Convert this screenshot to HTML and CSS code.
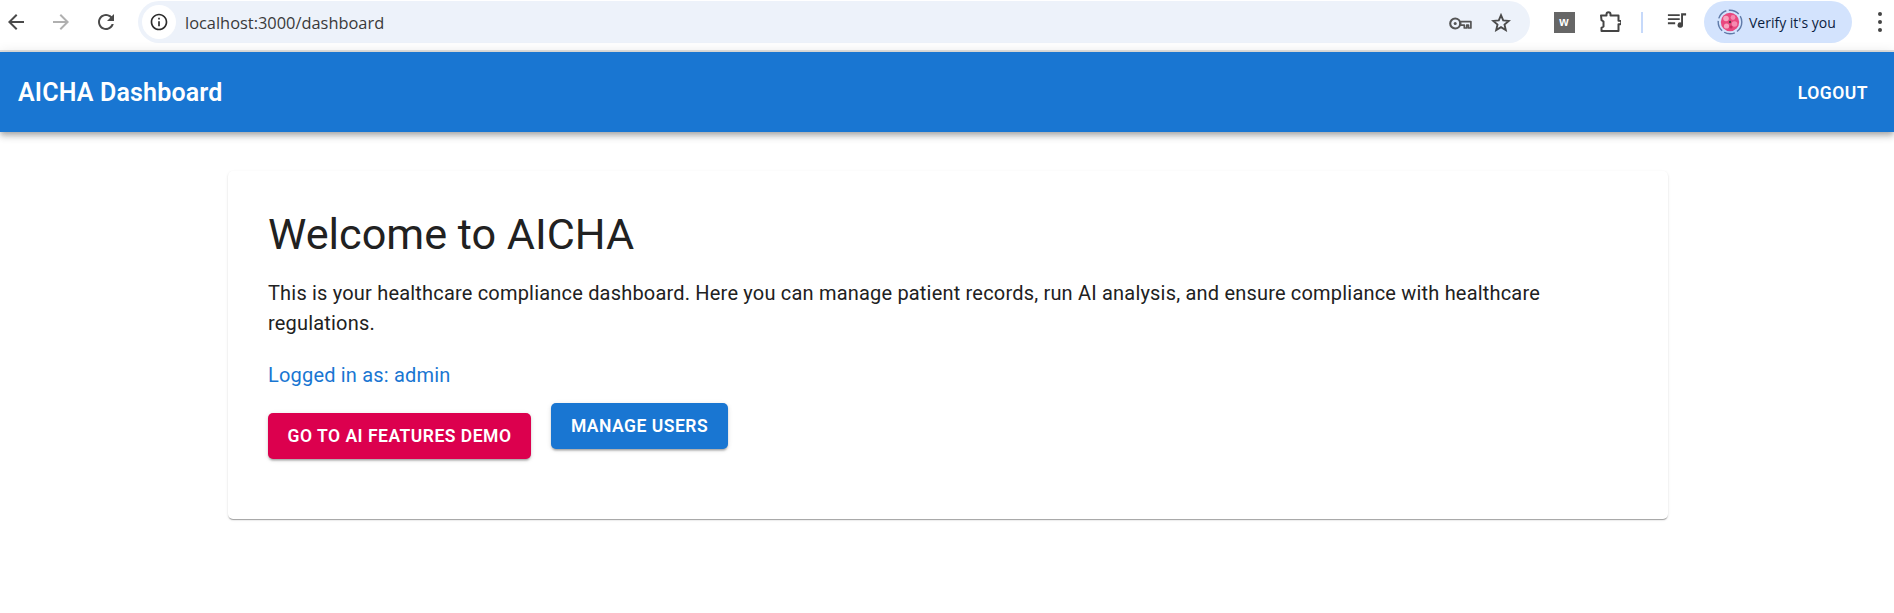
FILE: index.html
```html
<!DOCTYPE html>
<html lang="en">
<head>
<meta charset="utf-8">
<title>AICHA Dashboard</title>
<link rel="stylesheet" href="styles.css">
</head>
<body>
<div class="browser">
  <div class="nav">
    <span class="tool"><svg class="ico" viewBox="0 0 24 24"><path d="M20 11H7.83l5.59-5.59L12 4l-8 8 8 8 1.41-1.41L7.83 13H20v-2z"/></svg></span>
    <span class="tool tool-off"><svg class="ico" viewBox="0 0 24 24"><path d="M4 11h12.17l-5.59-5.59L12 4l8 8-8 8-1.41-1.41L16.17 13H4v-2z"/></svg></span>
    <span class="tool"><svg class="ico" viewBox="0 0 24 24"><path d="M17.65 6.35C16.2 4.9 14.21 4 12 4c-4.42 0-7.99 3.58-7.99 8s3.57 8 7.99 8c3.73 0 6.84-2.55 7.73-6h-2.08c-.82 2.33-3.04 4-5.65 4-3.31 0-6-2.69-6-6s2.69-6 6-6c1.66 0 3.14.69 4.22 1.78L13 11h7V4l-2.35 2.35z"/></svg></span>
  </div>
  <div class="omnibox">
    <span class="site-info"><svg class="ico-info" viewBox="0 0 24 24"><path d="M11 7h2v2h-2zm0 4h2v6h-2zm1-9C6.48 2 2 6.48 2 12s4.48 10 10 10 10-4.48 10-10S17.52 2 12 2zm0 18c-4.41 0-8-3.59-8-8s3.59-8 8-8 8 3.59 8 8-3.59 8-8 8z"/></svg></span>
    <span class="url">localhost:3000/dashboard</span>
    <span class="omni-actions">
      <svg class="ico-key" viewBox="0 0 23 13"><circle cx="6.2" cy="6.5" r="5" fill="none" stroke="#555" stroke-width="2.1"/><circle cx="6.2" cy="6.5" r="1.5" fill="#555"/><path d="M11.5 4.6h10.4v6.4h-2.4V8.2h-1.8V11h-2.4V8.2h-3.8z" fill="none" stroke="#555" stroke-width="1.7" stroke-linejoin="round"/></svg>
      <svg class="ico-star" viewBox="0 0 20 19"><path d="M10 2.2l2.2 5.2 5.6.5-4.3 3.7 1.3 5.5-4.8-2.9-4.8 2.9 1.3-5.5-4.3-3.7 5.6-.5z" fill="none" stroke="#4a4a4a" stroke-width="1.9"/></svg>
    </span>
  </div>
  <div class="extras">
    <span class="tool"><span class="ext-w">w</span></span>
    <span class="tool tool-puzzle"><svg class="ico-puzzle" viewBox="0 0 22 22"><path d="M2 4.5h5.5V3.2a2 2 0 0 1 4 0v1.3h8v5.2h1a1.8 1.8 0 0 1 0 3.6h-1V20H2.5v-3.2l2-1.3v-5l-2-1.3z" fill="none" stroke="#444" stroke-width="2" stroke-linejoin="round"/></svg></span>
    <span class="divider"></span>
    <span class="tool tool-music"><svg class="ico-music" viewBox="0 0 22 18"><path d="M1 2h13v2H1zM1 6.5h13v2H1zM1 11h8v2H1z" fill="#444"/><path d="M15.5 1h5.5v2.6h-3.4V14a3 3 0 1 1-2.1-2.8z" fill="#444"/></svg></span>
    <span class="chip">
      <svg class="avatar" viewBox="0 0 26 26">
        <circle cx="13" cy="13" r="11.8" fill="none" stroke="#5f7aa8" stroke-width="1.4" stroke-dasharray="11 2.5"/>
        <circle cx="13" cy="13" r="9.2" fill="#e9487f"/>
        <circle cx="9" cy="9.5" r="2.8" fill="#f7a3bf"/><circle cx="16" cy="8.5" r="2.4" fill="#f58ab0"/>
        <circle cx="17.5" cy="15" r="2.8" fill="#f58ab0"/><circle cx="9.5" cy="17" r="2.6" fill="#f7a3bf"/>
        <circle cx="14" cy="18" r="1.6" fill="#c92c63"/><circle cx="13" cy="13" r="1.2" fill="#5a3a44"/>
      </svg>
      <span class="chip-text">Verify it's you</span>
    </span>
    <span class="menu"><i class="dot"></i><i class="dot"></i><i class="dot"></i></span>
  </div>
</div>

<header class="appbar">
  <span class="brand">AICHA Dashboard</span>
  <span class="logout">Logout</span>
</header>

<main class="container">
  <section class="card">
    <h1 class="title">Welcome to AICHA</h1>
    <p class="intro">This is your healthcare compliance dashboard. Here you can manage patient records, run AI analysis, and ensure compliance with healthcare regulations.</p>
    <p class="who">Logged in as: admin</p>
    <div class="actions">
      <button class="btn btn-red">Go to AI Features Demo</button>
      <button class="btn btn-blue">Manage Users</button>
    </div>
  </section>
</main>
</body>
</html>
```
FILE: styles.css
```css
* { box-sizing: border-box; }
html, body { margin: 0; padding: 0; }
body { background: #fff; font-family: Roboto, "Liberation Sans", sans-serif; height: 613px; overflow: hidden; }

.browser { display: flex; align-items: center; height: 52px; padding-bottom: 6px; border-bottom: 2px solid #e2e2e0; background: #fff; }
.nav { display: flex; gap: 13px; flex: none; }
.tool { width: 32px; height: 32px; display: flex; align-items: center; justify-content: center; flex: none; }
.ico { width: 24px; height: 24px; fill: #4a4a4a; }
.tool-off .ico { fill: #b0b0b0; }

.omnibox { flex: 1; display: flex; align-items: center; height: 42px; margin-left: 16px; border-radius: 21px; background: #edf2fa; padding-left: 4px; }
.site-info { width: 34px; height: 34px; border-radius: 50%; background: #fff; display: flex; align-items: center; justify-content: center; flex: none; }
.ico-info { width: 20px; height: 20px; fill: #2b2b2b; }
.url { margin-left: 9px; font-family: "Open Sans", sans-serif; font-size: 16.4px; color: #3a3a3a; }
.omni-actions { margin-left: auto; display: flex; align-items: center; gap: 19px; padding-right: 19px; }
.ico-key { width: 23px; height: 13px; margin-top: 2px; }
.ico-star { width: 20px; height: 19px; }

.extras { flex: none; width: 364px; display: flex; align-items: center; padding-left: 18px; }
.ext-w { width: 21px; height: 21px; background: #666; color: #fff; font: 700 12px/21px "Liberation Sans", sans-serif; text-align: center; }
.tool-puzzle { margin-left: 14px; }
.ico-puzzle { width: 22px; height: 22px; }
.divider { width: 2px; height: 21px; background: #c6d9fa; margin-left: 15px; }
.tool-music { margin-left: 18px; }
.ico-music { width: 20px; height: 17px; margin-top: -3px; }
.chip { width: 148px; height: 42px; margin-left: 11px; border-radius: 21px; background: #d3e3fd; display: flex; align-items: center; padding-left: 13px; flex: none; }
.avatar { width: 26px; height: 26px; flex: none; }
.chip-text { margin-left: 6px; font-family: "Open Sans", sans-serif; font-size: 14px; color: #0b1d3f; white-space: nowrap; }
.menu { width: 28px; margin-left: 14px; display: flex; flex-direction: column; align-items: center; gap: 4px; flex: none; }
.dot { width: 4px; height: 4px; border-radius: 50%; background: #444; }

.appbar { display: flex; align-items: center; justify-content: space-between; height: 80px; padding: 1px 26px 0 18px; background: #1976d2; color: #fff; box-shadow: 0 2.5px 5px -1px rgba(0,0,0,.2), 0 5px 6px 0 rgba(0,0,0,.14), 0 1px 12px 0 rgba(0,0,0,.12); position: relative; }
.brand { font-size: 25px; font-weight: 600; line-height: 1.6; letter-spacing: .16px; }
.logout { font-size: 17.5px; font-weight: 600; letter-spacing: .5px; text-transform: uppercase; }

.container { width: 1500px; margin: 0 auto; padding: 39px 29px 0 31px; }
.card { height: 348px; padding: 38px 40px; border-radius: 5px; background: #fff; box-shadow: 0 2px 1px -1px rgba(0,0,0,.22), 0 1px 1px 0 rgba(0,0,0,.13), 0 1px 3px 0 rgba(0,0,0,.1); }
.title { margin: 0 0 17px; font-size: 43.2px; font-weight: 400; line-height: 52px; color: #212121; }
.intro { margin: 0 0 22px; font-size: 20px; line-height: 1.5; letter-spacing: .19px; color: #212121; }
.who { margin: 0 0 13px; font-size: 20px; line-height: 1.5; letter-spacing: .19px; color: #1976d2; }
.actions { display: flex; align-items: flex-start; gap: 20px; }
.btn { height: 46px; padding: 0; border: 0; border-radius: 5px; color: #fff; font: 600 17.5px Roboto, sans-serif; letter-spacing: .5px; text-transform: uppercase; white-space: nowrap; box-shadow: 0 3px 2px -2px rgba(0,0,0,.2), 0 2px 2px 0 rgba(0,0,0,.14), 0 1px 5px 0 rgba(0,0,0,.12); }
.btn-red { background: #dc004e; margin-top: 10px; width: 263px; }
.btn-blue { background: #1976d2; width: 177px; }
```
